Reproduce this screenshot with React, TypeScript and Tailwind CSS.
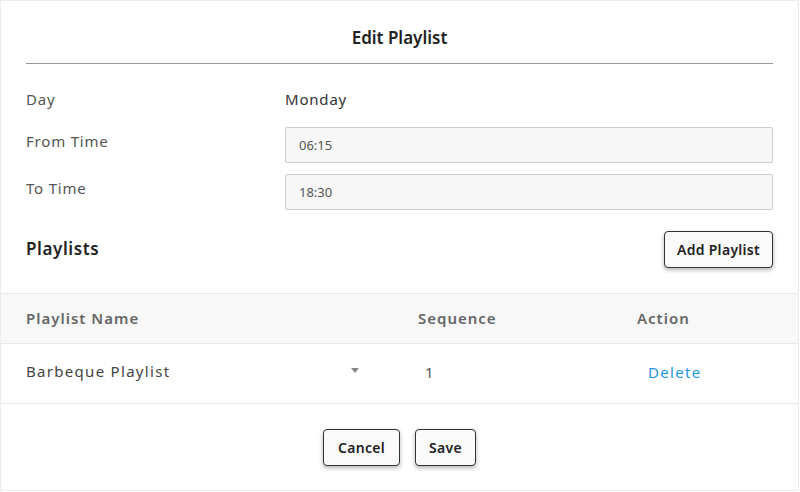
import { useState } from 'react';

const FONT = { fontFamily: '"Noto Sans", "Open Sans", sans-serif' };

const btn =
  'h-[37px] bg-[#fafafa] border border-[#333] rounded-[4px] shadow-[0_2px_4px_rgba(0,0,0,0.3)] text-[14px] font-semibold text-[#222] tracking-[0.3px]';

export default function App() {
  const [fromTime, setFromTime] = useState('06:15');
  const [toTime, setToTime] = useState('18:30');

  return (
    <div className="w-[800px] h-[492px] bg-white" style={FONT}>
      <div className="w-[799px] h-[491px] border border-[#eceeee] flex flex-col">
        <div className="px-[25px]">
          <h2 className="h-[63px] flex items-center justify-center pt-[12px] text-[17px] font-semibold text-[#222] border-b border-[#999]">
            Edit Playlist
          </h2>

          <div className="flex items-center h-[36px] mt-[17px] text-[15px] tracking-[0.8px]">
            <span className="w-[259px] text-[#555]">Day</span>
            <span className="text-[#333]">Monday</span>
          </div>

          <div className="flex items-start mt-[10px]">
            <label className="w-[259px] text-[15px] text-[#555] tracking-[0.8px] pt-[3px]">From Time</label>
            <input
              value={fromTime}
              onChange={e => setFromTime(e.target.value)}
              className="flex-1 h-[36px] px-[13px] bg-[#f7f7f7] border border-[#ccc] rounded-[2px] text-[13px] text-[#555] outline-none"
            />
          </div>

          <div className="flex items-start mt-[11px]">
            <label className="w-[259px] text-[15px] text-[#555] tracking-[0.8px] pt-[3px]">To Time</label>
            <input
              value={toTime}
              onChange={e => setToTime(e.target.value)}
              className="flex-1 h-[36px] px-[13px] bg-[#f7f7f7] border border-[#ccc] rounded-[2px] text-[13px] text-[#555] outline-none"
            />
          </div>

          <div className="flex items-center justify-between mt-[21px] h-[37px]">
            <h3 className="text-[17px] font-semibold text-[#222] tracking-[0.6px] -mt-[2px]">Playlists</h3>
            <button className={`${btn} w-[109px]`}>Add Playlist</button>
          </div>
        </div>

        <table className="w-full table-fixed mt-[25px] border-collapse text-[15px]">
          <thead>
            <tr className="h-[50px] bg-[#f8f8f8] border-t border-b border-[#e8e8e8]">
              <th className="pl-[25px] pb-[1px] text-left font-semibold text-[#666] tracking-[1px] w-[417px]">Playlist Name</th>
              <th className="pb-[1px] text-left font-semibold text-[#666] tracking-[1px] w-[219px]">Sequence</th>
              <th className="pb-[1px] text-left font-semibold text-[#666] tracking-[1px]">Action</th>
            </tr>
          </thead>
          <tbody>
            <tr className="h-[60px] border-b border-[#e8e8e8]">
              <td className="pl-[25px] pb-[4px]">
                <div className="flex items-center w-[333px] justify-between">
                  <span className="text-[#444] tracking-[1.3px]">Barbeque Playlist</span>
                  <svg width="8" height="5" viewBox="0 0 8 5" className="-mt-[2px]">
                    <path d="M0 0h8L4 5z" fill="#888" />
                  </svg>
                </div>
              </td>
              <td className="pl-[7px] pb-[2px] text-[#555]">1</td>
              <td className="pl-[11px] pb-[2px]">
                <a href="#" className="text-[#1f94dc] tracking-[1.3px]">Delete</a>
              </td>
            </tr>
          </tbody>
        </table>

        <div className="flex justify-center gap-[15px] mt-[25px]">
          <button className={`${btn} w-[77px]`}>Cancel</button>
          <button className={`${btn} w-[61px]`}>Save</button>
        </div>
      </div>
    </div>
  );
}
